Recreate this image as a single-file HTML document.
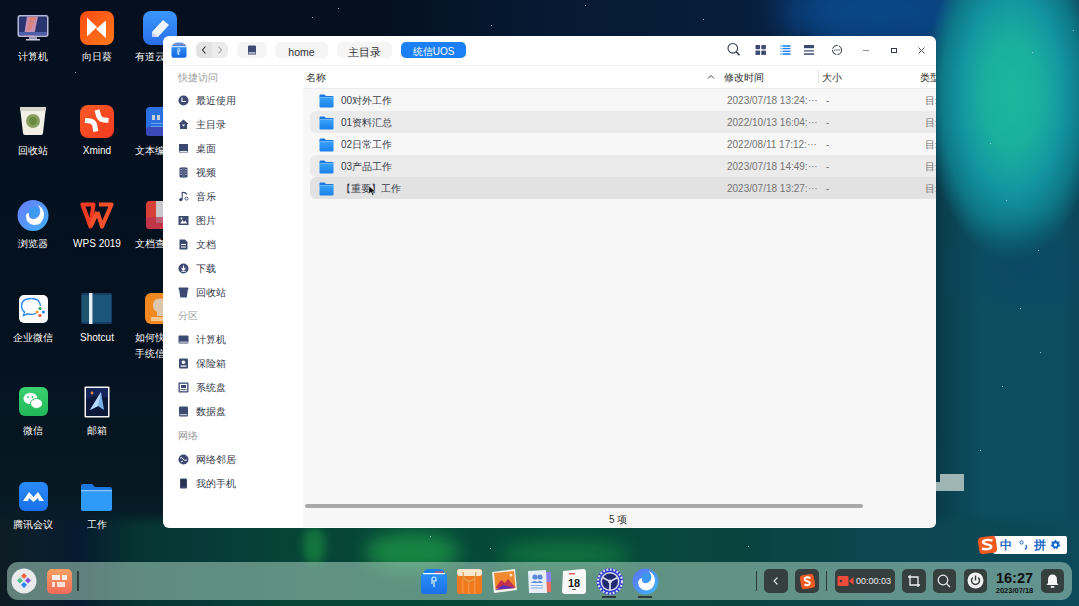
<!DOCTYPE html>
<html><head><meta charset="utf-8">
<style>
*{margin:0;padding:0;box-sizing:border-box}
html,body{width:1079px;height:606px;overflow:hidden}
body{position:relative;font-family:"Liberation Sans",sans-serif;background:#04101f}
.abs{position:absolute}
#bg{position:absolute;left:0;top:0;width:1079px;height:606px;overflow:hidden;
background:linear-gradient(180deg,#04101f 0,#04111f 320px,#061822 480px,#08202a 540px,#0a3030 600px)}
#bg div{position:absolute}

#win{position:absolute;left:163px;top:36px;width:773px;height:492px;background:#fff;border-radius:6px;overflow:hidden}
#main{position:absolute;left:140px;top:52px;width:633px;height:439px;background:#f7f7f7}
.t{position:absolute;white-space:nowrap;font-size:10px;line-height:12px}
.nav{position:absolute;top:6px;height:16px;border-radius:6px}
.crumb{position:absolute;top:6px;height:16px;border-radius:5px;background:#f5f5f6;color:#303030;font-size:10.5px;line-height:16px;padding-top:2px;text-align:center}
.side{position:absolute;left:15px;font-size:10px;line-height:12px;color:#353a4c;white-space:nowrap}
.side svg{position:absolute;left:0;top:1px}
.side span{position:absolute;left:18px;top:1px}
.sec{position:absolute;margin-top:1px;left:15px;font-size:10px;line-height:12px;color:#9a9a9a}
.row{position:absolute;left:7px;width:660px;height:22px;border-radius:6px}
.row .fi{position:absolute;left:9px;top:5px}
.row .nm{position:absolute;top:6px;left:31px;font-size:10px;line-height:12px;color:#383d4a;white-space:nowrap}
.row .dt{position:absolute;top:6px;left:417px;font-size:10px;line-height:12px;color:#737373;white-space:nowrap}
.row .sz{position:absolute;top:6px;left:516px;font-size:10px;line-height:12px;color:#737373}
.row .ty{position:absolute;top:6px;left:615px;font-size:10px;line-height:12px;color:#737373;white-space:nowrap}

.lbl{position:absolute;margin-top:1px;font-size:10px;line-height:12px;color:#fff;white-space:nowrap;text-shadow:0 0 2px rgba(0,0,0,0.8)}
.ico{position:absolute}

#dock{position:absolute;left:7px;top:562px;width:1065px;height:38px;border-radius:11px;background:rgba(156,196,180,0.6)}
.db{position:absolute;top:569px;height:24px;border-radius:5px;background:#353f3e}
.dsep{position:absolute;top:571px;width:2px;height:20px;background:#2f3a3a}
</style></head><body>
<div id="bg">
<div style="left:380px;top:0;width:420px;height:40px;background:linear-gradient(90deg,rgba(6,24,48,0),rgba(6,26,52,1) 40%,rgba(8,30,60,1))"></div>
<div style="left:900px;top:0;width:179px;height:606px;background:linear-gradient(90deg,rgba(10,60,75,0) 0,rgba(10,64,80,1) 45px,rgba(12,78,94,1) 80px,rgba(12,78,96,1) 160px,rgba(12,70,90,1))"></div>
<div style="left:780px;top:-40px;width:200px;height:100px;border-radius:50%;background:#0a4585;filter:blur(18px)"></div>
<div style="left:900px;top:0;width:179px;height:330px;background:radial-gradient(ellipse 88px 165px at 112px 95px,#1cb89c 0%,#19ad9e 35%,#1396a0 58%,#0e7888 80%,rgba(12,80,96,0) 100%)"></div>
<div style="left:936px;top:200px;width:143px;height:140px;background:radial-gradient(ellipse 90px 60px at 90px 70px,rgba(11,70,105,0.55),rgba(11,70,105,0))"></div>
<div style="left:0;top:512px;width:1079px;height:94px;background:linear-gradient(90deg,#0e1c22 0,#0a1e2c 40px,#061a30 80px,#063430 135px,#073a38 200px,#064436 300px,#054838 450px,#054a3a 600px,#0a4440 750px,#0c4650 880px,#0c4a5a 1079px);-webkit-mask-image:linear-gradient(180deg,transparent 0,#000 14px)"></div>
<div style="left:365px;top:532px;width:95px;height:40px;border-radius:50%;background:#1f9a48;filter:blur(9px);opacity:0.75"></div>
<div style="left:303px;top:528px;width:22px;height:36px;border-radius:40%;background:#1a8a42;filter:blur(5px);opacity:0.7"></div>
<div style="left:500px;top:540px;width:130px;height:30px;border-radius:50%;background:#178a40;filter:blur(9px);opacity:0.6"></div>
<div style="left:104px;top:27px;width:1px;height:1px;background:#c8d8e8;opacity:0.8"></div><div style="left:703px;top:19px;width:1px;height:1px;background:#c8d8e8;opacity:0.8"></div><div style="left:491px;top:25px;width:1px;height:1px;background:#c8d8e8;opacity:0.8"></div><div style="left:312px;top:17px;width:1px;height:1px;background:#c8d8e8;opacity:0.8"></div><div style="left:338px;top:8px;width:1px;height:1px;background:#c8d8e8;opacity:0.8"></div><div style="left:585px;top:5px;width:1px;height:1px;background:#c8d8e8;opacity:0.8"></div><div style="left:1032px;top:52px;width:1px;height:1px;background:#c8d8e8;opacity:0.8"></div><div style="left:1006px;top:200px;width:1px;height:1px;background:#c8d8e8;opacity:0.8"></div><div style="left:1020px;top:308px;width:1px;height:1px;background:#c8d8e8;opacity:0.8"></div><div style="left:1040px;top:352px;width:1px;height:1px;background:#c8d8e8;opacity:0.8"></div><div style="left:1002px;top:386px;width:1px;height:1px;background:#c8d8e8;opacity:0.8"></div><div style="left:1073px;top:30px;width:1px;height:1px;background:#c8d8e8;opacity:0.8"></div><div style="left:980px;top:450px;width:1px;height:1px;background:#c8d8e8;opacity:0.8"></div><div style="left:990px;top:143px;width:1px;height:1px;background:#c8d8e8;opacity:0.8"></div><div style="left:75px;top:72px;width:1px;height:1px;background:#c8d8e8;opacity:0.8"></div><div style="left:105px;top:128px;width:1px;height:1px;background:#c8d8e8;opacity:0.8"></div><div style="left:150px;top:150px;width:1px;height:1px;background:#c8d8e8;opacity:0.8"></div><div style="left:430px;top:536px;width:1px;height:1px;background:#c8d8e8;opacity:0.8"></div><div style="left:490px;top:548px;width:1px;height:1px;background:#c8d8e8;opacity:0.8"></div><div style="left:748px;top:546px;width:1px;height:1px;background:#c8d8e8;opacity:0.8"></div><div style="left:1038px;top:250px;width:1px;height:1px;background:#c8d8e8;opacity:0.8"></div>
</div>

<div id="desk">
<svg class="ico" style="left:16px;top:14px" width="34" height="28" viewBox="0 0 34 28">
<rect x="1.5" y="1" width="31" height="22" rx="2.5" fill="#b8b8d8"/>
<rect x="3" y="2.5" width="28" height="19" rx="1" fill="#2a3570"/>
<path d="M11 2.5 L22 2.5 L18 21.5 L8 21.5 Z" fill="#c890b0"/>
<path d="M14 3 L20 3 L15 15 L11 18 Z" fill="#e0806a" opacity="0.8"/>
<rect x="3" y="18" width="28" height="3" fill="#5060a8"/>
<rect x="13" y="23" width="8" height="2.5" fill="#9a9ab8"/>
<rect x="10" y="25" width="14" height="1.5" fill="#c8c8d8"/>
</svg><div class="lbl" style="left:-17px;width:100px;text-align:center;top:50px">计算机</div>
<svg class="ico" style="left:80px;top:11px" width="34" height="34" viewBox="0 0 34 34">
<defs><linearGradient id="g1" x1="0" y1="0" x2="1" y2="1"><stop offset="0" stop-color="#ff4a14"/><stop offset="1" stop-color="#ff7a18"/></linearGradient></defs>
<rect x="0" y="0" width="34" height="34" rx="8" fill="url(#g1)"/>
<path d="M7 6.5 L17 16 L7 25.5 Z" fill="#fff"/><path d="M26 9.5 L26 27 L16 18 Z" fill="#fff"/>
</svg><div class="lbl" style="left:47px;width:100px;text-align:center;top:50px">向日葵</div>
<svg class="ico" style="left:143px;top:11px" width="34" height="34" viewBox="0 0 34 34">
<defs><linearGradient id="g2" x1="0" y1="0" x2="0" y2="1"><stop offset="0" stop-color="#3a98ff"/><stop offset="1" stop-color="#2a6ee8"/></linearGradient></defs>
<rect x="0" y="0" width="34" height="34" rx="8" fill="url(#g2)"/>
<path d="M9 21 L20 9 L26 14 L15 26 L9 26 Z" fill="#f0f4ff"/><path d="M9 21 L15 26 L9 26 Z" fill="#c8d4f0"/>
</svg><div class="lbl" style="left:110px;width:100px;text-align:center;top:50px">有道云笔记</div>
<svg class="ico" style="left:19px;top:106px" width="28" height="30" viewBox="0 0 28 30">
<path d="M1 1 L27 1 L24 27 Q24 29 22 29 L6 29 Q4 29 4 27 Z" fill="#f2f0e6"/>
<path d="M1 1 L27 1 L26.5 5 L1.5 5 Z" fill="#d8d6cc"/>
<circle cx="14" cy="15" r="7" fill="#8aa060"/><circle cx="14" cy="15" r="4" fill="#6a8a40"/>
</svg><div class="lbl" style="left:-17px;width:100px;text-align:center;top:144px">回收站</div>
<svg class="ico" style="left:80px;top:105px" width="34" height="33" viewBox="0 0 34 33">
<defs><linearGradient id="g3" x1="0" y1="0" x2="1" y2="1"><stop offset="0" stop-color="#ff5a28"/><stop offset="1" stop-color="#f03a20"/></linearGradient></defs>
<rect x="0" y="0" width="34" height="33" rx="8" fill="url(#g3)"/>
<path d="M5 15.5 L10.5 16 Q14 17 14.8 20.5 L15.8 26.5" stroke="#fff" stroke-width="5" fill="none"/><path d="M17 5 L18.5 10.5 Q19.5 14 23 14.8 L28.5 15.5" stroke="#fff" stroke-width="5" fill="none"/>
</svg><div class="lbl" style="left:47px;width:100px;text-align:center;top:144px">Xmind</div>
<svg class="ico" style="left:146px;top:107px" width="30" height="29" viewBox="0 0 30 29">
<rect x="0" y="0" width="30" height="29" rx="4" fill="#2a70e0"/><rect x="0" y="20" width="30" height="9" rx="3" fill="#3a4ab8"/>
<rect x="6" y="8" width="3" height="5" fill="#c8d0d8"/><rect x="11" y="8" width="3" height="5" fill="#c8d0d8"/>
<rect x="5" y="16" width="14" height="1" fill="#6aa0f0"/><rect x="5" y="19" width="14" height="1" fill="#6aa0f0"/>
</svg><div class="lbl" style="left:135px;top:144px">文本编辑器</div>
<svg class="ico" style="left:17px;top:199px" width="32" height="33" viewBox="0 0 32 33">
<defs><linearGradient id="g4" x1="0" y1="0" x2="1" y2="1"><stop offset="0" stop-color="#6a7cf8"/><stop offset="1" stop-color="#40b0f8"/></linearGradient></defs>
<circle cx="16" cy="16.5" r="15.5" fill="url(#g4)"/>
<path d="M9 17 Q9 25 17 26 Q26 26 27 16 Q27 9 21 6 Q25 12 22 17 Q19 21 15 20 Q11 19 12 14 Q9 14 9 17 Z" fill="#fff"/>
<circle cx="17" cy="13" r="5" fill="#3a9af0"/>
</svg><div class="lbl" style="left:-17px;width:100px;text-align:center;top:237px">浏览器</div>
<svg class="ico" style="left:80px;top:202px" width="34" height="28" viewBox="0 0 34 28">
<path d="M2.5 2.5 L13.5 2.5 L10.5 24.5 Z" stroke="#f03a24" stroke-width="4.2" stroke-linejoin="round" fill="none"/>
<path d="M10.5 24.5 L17.5 10 M17.5 10 L22 24.5 L31.5 2.5 L19 2.5" stroke="#f5502a" stroke-width="4.2" stroke-linejoin="round" fill="none"/>
</svg><div class="lbl" style="left:47px;width:100px;text-align:center;top:237px">WPS 2019</div>
<svg class="ico" style="left:146px;top:201px" width="30" height="28" viewBox="0 0 30 28">
<rect x="8" y="0" width="20" height="24" fill="#c8c8cc"/>
<path d="M0 4 Q0 0 4 0 L10 0 L10 22 L22 22 Q22 28 18 28 L4 28 Q0 28 0 24 Z" fill="#d8403a"/>
<rect x="0" y="16" width="20" height="12" rx="3" fill="#b83050" opacity="0.7"/>
</svg><div class="lbl" style="left:135px;top:237px">文档查看器</div>
<svg class="ico" style="left:19px;top:295px" width="29" height="28" viewBox="0 0 29 28">
<rect x="0" y="0" width="29" height="28" rx="5" fill="#fafcff"/>
<path d="M12.5 3.5 Q2.5 3.5 2.5 11 Q2.5 15 5.5 17 L4.5 20.5 L8.5 18.8 Q10.5 19.3 12.5 19.3 Q15 19.3 17 18.5" fill="none" stroke="#2a8af0" stroke-width="1.3"/><path d="M12.5 3.5 Q21 3.5 21.5 11" fill="none" stroke="#2a8af0" stroke-width="1.3"/>
<circle cx="21" cy="13.5" r="1.6" fill="#20a860"/><circle cx="18" cy="17" r="1.6" fill="#f0a030"/><circle cx="21" cy="20.5" r="1.6" fill="#f05030"/><circle cx="24.5" cy="17" r="1.6" fill="#2a8af0"/>
</svg><div class="lbl" style="left:-17px;width:100px;text-align:center;top:331px">企业微信</div>
<svg class="ico" style="left:81px;top:293px" width="31" height="31" viewBox="0 0 31 31">
<rect x="0" y="0" width="31" height="31" rx="2" fill="#163e62"/>
<rect x="1" y="2" width="7" height="27" fill="#1d5270"/><rect x="12" y="2" width="18" height="27" fill="#1c5678"/>
<rect x="8" y="0" width="3.5" height="31" fill="#e8f0f8"/>
</svg><div class="lbl" style="left:47px;width:100px;text-align:center;top:331px">Shotcut</div>
<svg class="ico" style="left:145px;top:293px" width="30" height="31" viewBox="0 0 30 31">
<rect x="0" y="0" width="30" height="31" rx="6" fill="#f08a20"/>
<path d="M12 6 Q19 4 22 10 Q23 16 18 19 L18 23 L12 23 L12 19 Q7 16 8 11 Q9 7 12 6 Z" fill="#d8d0c8" opacity="0.85"/>
<rect x="6" y="24" width="12" height="4" fill="#f8e0c0" opacity="0.7"/>
</svg><div class="lbl" style="left:135px;top:331px">如何快速上</div>
<div class="lbl" style="left:135px;top:347px">手统信UOS</div>
<svg class="ico" style="left:19px;top:387px" width="29" height="29" viewBox="0 0 29 29">
<defs><linearGradient id="g5" x1="0" y1="0" x2="0" y2="1"><stop offset="0" stop-color="#3ad070"/><stop offset="1" stop-color="#20b858"/></linearGradient></defs>
<rect x="0" y="0" width="29" height="29" rx="6" fill="url(#g5)"/>
<ellipse cx="11.5" cy="11.5" rx="7" ry="5.8" fill="#fff"/><ellipse cx="17.5" cy="16.5" rx="6" ry="5" fill="#fff" stroke="#28c060" stroke-width="1"/>
<circle cx="9" cy="10" r="0.9" fill="#28c060"/><circle cx="13.5" cy="10" r="0.9" fill="#28c060"/>
</svg><div class="lbl" style="left:-17px;width:100px;text-align:center;top:424px">微信</div>
<svg class="ico" style="left:84px;top:386px" width="26" height="32" viewBox="0 0 26 32">
<rect x="0.5" y="0.5" width="25" height="31" rx="1" fill="#f4f4f4"/>
<rect x="2" y="2" width="22" height="28" fill="#0c1838"/>
<path d="M2 2 L24 2 L24 12 Q14 6 2 14 Z" fill="#1a2a6a" opacity="0.7"/>
<path d="M17 6 L20 24 L14 20 L6 24 Z" fill="#7ab0e8"/><path d="M17 6 L14 20 L6 24 Z" fill="#b8d8ff"/>
<circle cx="8" cy="7" r="1.4" fill="#f08a30"/>
</svg><div class="lbl" style="left:47px;width:100px;text-align:center;top:424px">邮箱</div>
<svg class="ico" style="left:19px;top:482px" width="29" height="29" viewBox="0 0 29 29">
<defs><linearGradient id="g6" x1="0" y1="0" x2="0" y2="1"><stop offset="0" stop-color="#2a8cf8"/><stop offset="1" stop-color="#1a70e8"/></linearGradient></defs>
<rect x="0" y="0" width="29" height="29" rx="6" fill="url(#g6)"/>
<path d="M4 19 L10 10 L14.5 15 L19 10 L25 19 L20 19 L19 16 L14.5 20 L10 16 L9 19 Z" fill="#fff"/>
</svg><div class="lbl" style="left:-17px;width:100px;text-align:center;top:518px">腾讯会议</div>
<svg class="ico" style="left:81px;top:484px" width="31" height="27" viewBox="0 0 31 27">
<path d="M0 2 Q0 0 2 0 L11 0 L14 3 L29 3 Q31 3 31 5 L31 8 L0 8 Z" fill="#1a78e0"/>
<path d="M0 6 L31 6 L31 25 Q31 27 29 27 L2 27 Q0 27 0 25 Z" fill="#2f9af8"/>
<rect x="0" y="6" width="31" height="1.2" fill="#8ccaff"/>
</svg><div class="lbl" style="left:47px;width:100px;text-align:center;top:518px">工作</div>
</div>
<div id="win">
 <!-- title bar -->
 <svg class="abs" style="left:8px;top:6px" width="16" height="16" viewBox="0 0 16 16">
<defs><linearGradient id="ti" x1="0" y1="0" x2="0" y2="1"><stop offset="0" stop-color="#3a9af8"/><stop offset="1" stop-color="#1268e0"/></linearGradient></defs>
<path d="M0.5 6 Q0.5 0.5 8 0.5 Q15.5 0.5 15.5 6 L15.5 14 Q15.5 15.8 13.5 15.8 L2.5 15.8 Q0.5 15.8 0.5 14 Z" fill="url(#ti)"/>
<path d="M2.5 2.6 Q8 1.2 13.5 2.6" stroke="#e87a8a" stroke-width="0.8" fill="none"/>
<rect x="1" y="4.2" width="14" height="1" fill="#fff" opacity="0.95"/>
<path d="M6.8 12.5 L6.8 7.5 Q6.8 6.6 7.8 6.6 Q8.8 6.6 8.8 7.5 L8.8 9 L6.8 9 M7.8 9 L7.8 13" stroke="#d8ecff" stroke-width="0.9" fill="none"/>
</svg>
 <div class="nav" style="left:33px;width:32px;background:#ececec"></div>
 <div class="nav" style="left:33px;width:16px;background:#e3e3e3;border-radius:6px 0 0 6px"></div>
 <svg class="abs" style="left:37px;top:8px" width="8" height="12" viewBox="0 0 8 12"><path d="M5.5 2.5 L2.5 6 L5.5 9.5" stroke="#303030" stroke-width="1.1" fill="none"/></svg>
 <svg class="abs" style="left:53px;top:8px" width="8" height="12" viewBox="0 0 8 12"><path d="M2.5 2.5 L5.5 6 L2.5 9.5" stroke="#a0a0a0" stroke-width="1.1" fill="none"/></svg>
 <div class="crumb" style="left:74px;width:30px"></div>
 <svg class="abs" style="left:84px;top:9px" width="10" height="10" viewBox="0 0 10 10"><path d="M1 1.5 Q1 0.5 2 0.5 L8 0.5 Q9 0.5 9 1.5 L9 9.5 L1 9.5 Z" fill="#3c4a72"/><rect x="1.6" y="7.3" width="6.8" height="1.2" fill="#e6e8ef"/></svg>
 <div class="crumb" style="left:112px;width:53px">home</div>
 <div class="crumb" style="left:174px;width:55px">主目录</div>
 <div class="crumb" style="left:238px;width:65px;background:#1b7ff5;color:#fff;font-size:10px">统信UOS</div>
 <!-- right icons -->
 <svg class="abs" style="left:563px;top:6px" width="16" height="16" viewBox="0 0 16 16"><circle cx="6.8" cy="6.3" r="4.8" stroke="#303848" stroke-width="1.1" fill="none"/><path d="M10.2 9.8 L13.5 13.2" stroke="#303848" stroke-width="1.6"/></svg>
 <svg class="abs" style="left:592px;top:9px" width="12" height="11" viewBox="0 0 12 11"><rect x="0.5" y="0" width="4.6" height="4.3" rx="0.8" fill="#3c4a72"/><rect x="6.3" y="0" width="4.6" height="4.3" rx="0.8" fill="#3c4a72"/><rect x="0.5" y="5.6" width="4.6" height="4.3" fill="#3c4a72"/><rect x="6.3" y="5.6" width="4.6" height="4.3" fill="#3c4a72"/></svg>
 <svg class="abs" style="left:617px;top:9px" width="12" height="11" viewBox="0 0 12 11"><g fill="#1b7ff5"><rect x="0.5" y="0.2" width="1" height="1.6"/><rect x="2.5" y="0.2" width="8" height="1.6"/><rect x="0.5" y="2.9" width="1" height="1.3"/><rect x="2.5" y="2.9" width="8" height="1.3"/><rect x="0.5" y="5.6" width="1" height="1.3"/><rect x="2.5" y="5.6" width="8" height="1.3"/><rect x="0.5" y="8.2" width="1" height="1.6"/><rect x="2.5" y="8.2" width="8" height="1.6"/></g></svg>
 <svg class="abs" style="left:641px;top:9px" width="12" height="11" viewBox="0 0 12 11"><g fill="#3c4a72"><rect x="0" y="0" width="10" height="3.2"/><rect x="0" y="5.3" width="10" height="1.2"/><rect x="0" y="8.3" width="10" height="1.5"/></g></svg>
 <svg class="abs" style="left:668px;top:8px" width="12" height="12" viewBox="0 0 12 12"><circle cx="6" cy="6" r="4.6" stroke="#303848" stroke-width="1" fill="none" stroke-dasharray="6.5 1.2"/><circle cx="3.9" cy="6" r="0.65" fill="#303848"/><circle cx="6" cy="6" r="0.65" fill="#303848"/><circle cx="8.1" cy="6" r="0.65" fill="#303848"/></svg>
 <div class="abs" style="left:700px;top:14px;width:6px;height:1px;background:#8a8fa0"></div>
 <div class="abs" style="left:728px;top:12px;width:6px;height:5px;border:1px solid #303848"></div>
 <svg class="abs" style="left:754px;top:10px" width="9" height="9" viewBox="0 0 9 9"><path d="M1.5 1.5 L7.5 7.5 M7.5 1.5 L1.5 7.5" stroke="#555" stroke-width="1"/></svg>
 <div class="abs" style="left:0;top:29px;width:773px;height:1px;background:#f3f3f3"></div>

 <!-- sidebar -->
 <div class="sec" style="top:35px">快捷访问</div>
 <div class="side" style="top:58px"><svg width="11" height="11" viewBox="0 0 11 11"><circle cx="5.5" cy="5.5" r="5" fill="#3c4a72"/><path d="M4 2.5 L4 6.5 L8 6.5" stroke="#fff" stroke-width="1.1" fill="none"/></svg><span>最近使用</span></div>
 <div class="side" style="top:82px"><svg width="11" height="11" viewBox="0 0 11 11"><path d="M5.5 0.5 L10.5 5 L9 5 L9 10 L2 10 L2 5 L0.5 5 Z" fill="#3c4a72"/><path d="M3.8 5.5 L7.2 5.5 L5.5 7.5 Z" fill="#fff"/></svg><span>主目录</span></div>
 <div class="side" style="top:106px"><svg width="11" height="11" viewBox="0 0 11 11"><rect x="1" y="1" width="9" height="8.5" fill="#3c4a72"/><rect x="1.6" y="8" width="7.8" height="1" fill="#e6e8ef"/></svg><span>桌面</span></div>
 <div class="side" style="top:130px"><svg width="11" height="11" viewBox="0 0 11 11"><rect x="1.5" y="0.5" width="8" height="10" rx="1" fill="#3c4a72"/><g fill="#fff"><rect x="2.6" y="2" width="1" height="1"/><rect x="2.6" y="4.5" width="1" height="1"/><rect x="2.6" y="7" width="1" height="1"/><rect x="7.4" y="2" width="1" height="1"/><rect x="7.4" y="4.5" width="1" height="1"/><rect x="7.4" y="7" width="1" height="1"/><rect x="4.2" y="0.5" width="2.6" height="10" fill="#5a6688"/></g></svg><span>视频</span></div>
 <div class="side" style="top:154px"><svg width="11" height="11" viewBox="0 0 11 11"><path d="M4.2 8.5 L4.2 1.5 Q7.5 1 9 3.5" stroke="#3c4a72" stroke-width="1.1" fill="none"/><circle cx="2.8" cy="8.6" r="1.7" fill="#3c4a72"/><circle cx="8.5" cy="7.6" r="1.5" fill="none" stroke="#3c4a72" stroke-width="0.9"/></svg><span>音乐</span></div>
 <div class="side" style="top:178px"><svg width="11" height="11" viewBox="0 0 11 11"><rect x="0.5" y="1" width="10" height="9" fill="#3c4a72"/><path d="M2 8.5 L4.5 5 L6 7 L7.5 5.5 L9 8.5 Z" fill="#fff"/><circle cx="3.5" cy="3.5" r="1" fill="#fff"/></svg><span>图片</span></div>
 <div class="side" style="top:202px"><svg width="11" height="11" viewBox="0 0 11 11"><path d="M1.5 0.5 L7 0.5 L9.5 3 L9.5 10.5 L1.5 10.5 Z" fill="#3c4a72"/><g fill="#fff"><rect x="3" y="5" width="5" height="1"/><rect x="3" y="7.5" width="5" height="1"/></g></svg><span>文档</span></div>
 <div class="side" style="top:226px"><svg width="11" height="11" viewBox="0 0 11 11"><circle cx="5.5" cy="5.5" r="5" fill="#3c4a72"/><path d="M5.5 2.5 L5.5 6.5 M3.5 5 L5.5 7 L7.5 5 M3.3 8.3 L7.7 8.3" stroke="#fff" stroke-width="1.1" fill="none"/></svg><span>下载</span></div>
 <div class="side" style="top:250px"><svg width="11" height="11" viewBox="0 0 11 11"><path d="M1 1.5 L10 1.5 L8.7 10.5 L2.3 10.5 Z" fill="#3c4a72"/><rect x="0.5" y="0.5" width="10" height="2" rx="1" fill="#3c4a72"/></svg><span>回收站</span></div>
 <div class="sec" style="top:273px">分区</div>
 <div class="side" style="top:297px"><svg width="11" height="11" viewBox="0 0 11 11"><rect x="0.5" y="1.5" width="10" height="8" rx="1" fill="#3c4a72"/><rect x="1.2" y="7.6" width="8.6" height="1" fill="#e6e8ef"/></svg><span>计算机</span></div>
 <div class="side" style="top:321px"><svg width="11" height="11" viewBox="0 0 11 11"><rect x="1" y="0.5" width="9" height="10" rx="1" fill="#3c4a72"/><circle cx="5.5" cy="4.2" r="1.8" fill="#fff"/><rect x="2.5" y="7.5" width="6" height="1.2" fill="#fff"/></svg><span>保险箱</span></div>
 <div class="side" style="top:345px"><svg width="11" height="11" viewBox="0 0 11 11"><rect x="0.5" y="0.5" width="10" height="10" rx="1" fill="#3c4a72"/><rect x="1.8" y="1.8" width="7.4" height="7.4" fill="#fff"/><rect x="3" y="3" width="5" height="3" fill="#3c4a72"/><rect x="2.5" y="7.2" width="6" height="1" fill="#3c4a72"/></svg><span>系统盘</span></div>
 <div class="side" style="top:369px"><svg width="11" height="11" viewBox="0 0 11 11"><rect x="1" y="0.5" width="9" height="10" rx="1" fill="#3c4a72"/><rect x="1.6" y="8.2" width="7.8" height="1" fill="#e6e8ef"/></svg><span>数据盘</span></div>
 <div class="sec" style="top:393px">网络</div>
 <div class="side" style="top:417px"><svg width="11" height="11" viewBox="0 0 11 11"><circle cx="5.5" cy="5.5" r="5" fill="#3c4a72"/><path d="M2 4 Q4 3 5 5 Q6 7 9 6 M3 8 L5 7" stroke="#fff" stroke-width="1" fill="none"/></svg><span>网络邻居</span></div>
 <div class="side" style="top:441px"><svg width="11" height="11" viewBox="0 0 11 11"><rect x="2" y="0.5" width="7" height="10" rx="1" fill="#3c4a72"/><rect x="3" y="1.5" width="5" height="7" fill="#2a3350"/></svg><span>我的手机</span></div>

 <!-- main -->
 <svg width="0" height="0" style="position:absolute"><defs><linearGradient id="fg" x1="0" y1="0" x2="0" y2="1"><stop offset="0" stop-color="#3aa4fa"/><stop offset="1" stop-color="#1a80ea"/></linearGradient></defs></svg>
 <div id="main">
  <div class="abs" style="left:0;top:-22px;width:633px;height:22px;background:#fff"></div>
  <div class="abs" style="left:0;top:0;width:633px;height:1px;background:#ececec"></div>
  <div class="t" style="left:3px;top:-16px;color:#303030">名称</div>
  <svg class="abs" style="left:403px;top:-16px" width="10" height="10" viewBox="0 0 10 10"><path d="M2 6.5 L5 3.5 L8 6.5" stroke="#404040" stroke-width="1" fill="none"/></svg>
  <div class="t" style="left:421px;top:-16px;color:#303030">修改时间</div>
  <div class="abs" style="left:515px;top:-18px;width:1px;height:14px;background:#e4e4e4"></div>
  <div class="t" style="left:519px;top:-16px;color:#303030">大小</div>
  <div class="t" style="left:617px;top:-16px;color:#303030">类型</div>
<div class="row" style="top:1px;background:#f7f7f7"><svg class="fi" width="15" height="14" viewBox="0 0 15 14"><path d="M0.5 1.5 Q0.5 0.5 1.5 0.5 L5.5 0.5 L7 2 L13.5 2 Q14.5 2 14.5 3 L14.5 4 L0.5 4 Z" fill="#1a78e0"/><path d="M0.5 3.2 L14.5 3.2 L14.5 12.5 Q14.5 13.5 13.5 13.5 L1.5 13.5 Q0.5 13.5 0.5 12.5 Z" fill="url(#fg)"/><rect x="0.5" y="3.2" width="14" height="0.8" fill="#7cc0ff"/></svg><div class="nm">00对外工作</div><div class="dt">2023/07/18 13:24:···</div><div class="sz">-</div><div class="ty">目录</div></div>
<div class="row" style="top:23px;background:#ebebeb"><svg class="fi" width="15" height="14" viewBox="0 0 15 14"><path d="M0.5 1.5 Q0.5 0.5 1.5 0.5 L5.5 0.5 L7 2 L13.5 2 Q14.5 2 14.5 3 L14.5 4 L0.5 4 Z" fill="#1a78e0"/><path d="M0.5 3.2 L14.5 3.2 L14.5 12.5 Q14.5 13.5 13.5 13.5 L1.5 13.5 Q0.5 13.5 0.5 12.5 Z" fill="url(#fg)"/><rect x="0.5" y="3.2" width="14" height="0.8" fill="#7cc0ff"/></svg><div class="nm">01资料汇总</div><div class="dt">2022/10/13 16:04:···</div><div class="sz">-</div><div class="ty">目录</div></div>
<div class="row" style="top:45px;background:#f7f7f7"><svg class="fi" width="15" height="14" viewBox="0 0 15 14"><path d="M0.5 1.5 Q0.5 0.5 1.5 0.5 L5.5 0.5 L7 2 L13.5 2 Q14.5 2 14.5 3 L14.5 4 L0.5 4 Z" fill="#1a78e0"/><path d="M0.5 3.2 L14.5 3.2 L14.5 12.5 Q14.5 13.5 13.5 13.5 L1.5 13.5 Q0.5 13.5 0.5 12.5 Z" fill="url(#fg)"/><rect x="0.5" y="3.2" width="14" height="0.8" fill="#7cc0ff"/></svg><div class="nm">02日常工作</div><div class="dt">2022/08/11 17:12:···</div><div class="sz">-</div><div class="ty">目录</div></div>
<div class="row" style="top:67px;background:#ebebeb"><svg class="fi" width="15" height="14" viewBox="0 0 15 14"><path d="M0.5 1.5 Q0.5 0.5 1.5 0.5 L5.5 0.5 L7 2 L13.5 2 Q14.5 2 14.5 3 L14.5 4 L0.5 4 Z" fill="#1a78e0"/><path d="M0.5 3.2 L14.5 3.2 L14.5 12.5 Q14.5 13.5 13.5 13.5 L1.5 13.5 Q0.5 13.5 0.5 12.5 Z" fill="url(#fg)"/><rect x="0.5" y="3.2" width="14" height="0.8" fill="#7cc0ff"/></svg><div class="nm">03产品工作</div><div class="dt">2023/07/18 14:49:···</div><div class="sz">-</div><div class="ty">目录</div></div>
<div class="row" style="top:89px;background:#e2e2e2"><svg class="fi" width="15" height="14" viewBox="0 0 15 14"><path d="M0.5 1.5 Q0.5 0.5 1.5 0.5 L5.5 0.5 L7 2 L13.5 2 Q14.5 2 14.5 3 L14.5 4 L0.5 4 Z" fill="#1a78e0"/><path d="M0.5 3.2 L14.5 3.2 L14.5 12.5 Q14.5 13.5 13.5 13.5 L1.5 13.5 Q0.5 13.5 0.5 12.5 Z" fill="url(#fg)"/><rect x="0.5" y="3.2" width="14" height="0.8" fill="#7cc0ff"/></svg><div class="nm">【重要】工作</div><div class="dt">2023/07/18 13:27:···</div><div class="sz">-</div><div class="ty">目录</div></div>
<div class="abs" style="left:2px;top:416px;width:558px;height:4px;border-radius:2px;background:#a8a8a8"></div>
<div class="t" style="left:306px;top:426px;color:#303030">5 项</div>

 </div>
</div>
<div id="dock"></div>
<svg class="abs" style="left:11px;top:568px" width="26" height="26" viewBox="0 0 26 26">
<circle cx="13" cy="13" r="12.5" fill="#e8eaec"/>
<path d="M13 5 L16 8 L13 11 L10 8 Z" fill="#f06a3a"/><path d="M17 9.5 L20 12.5 L17 15.5 L14 12.5 Z" fill="#8a50e0"/>
<path d="M13 14 L16 17 L13 20 L10 17 Z" fill="#2a88f0"/><path d="M9 9.5 L12 12.5 L9 15.5 L6 12.5 Z" fill="#50c090"/>
</svg><svg class="abs" style="left:47px;top:569px" width="25" height="25" viewBox="0 0 25 25">
<defs><linearGradient id="d1" x1="0" y1="0" x2="0" y2="1"><stop offset="0" stop-color="#f8a060"/><stop offset="1" stop-color="#f06a5a"/></linearGradient></defs>
<rect x="0" y="0" width="25" height="25" rx="5" fill="url(#d1)"/>
<rect x="5" y="6" width="8" height="5" fill="#fff" opacity="0.85"/><rect x="15" y="6" width="5" height="5" fill="#fff" opacity="0.85"/>
<rect x="5" y="13" width="3" height="5" fill="#fff" opacity="0.75"/><rect x="10" y="13" width="8" height="5" fill="#fff" opacity="0.75"/>
</svg><div class="dsep" style="left:77px;width:1.5px"></div>
<svg class="abs" style="left:421px;top:568px" width="26" height="27" viewBox="0 0 26 27">
<defs><linearGradient id="d2" x1="0" y1="0" x2="0" y2="1"><stop offset="0" stop-color="#2a90f8"/><stop offset="1" stop-color="#1a70e8"/></linearGradient></defs>
<path d="M3 4 Q3 1 8 1 L18 1 Q23 1 23 4 L23 6 L3 6 Z" fill="#1a80f0"/>
<rect x="0" y="5" width="26" height="21" rx="3" fill="url(#d2)"/>
<rect x="2" y="5" width="22" height="1.2" fill="#fff"/><rect x="14" y="3.5" width="8" height="1.2" fill="#f05050"/>
<path d="M11 16 L11 11 Q11 9 13 9 Q15 9 15 11 L15 13 L11 13 M13 13 L13 19" stroke="#d8ecff" stroke-width="1.2" fill="none"/>
</svg><svg class="abs" style="left:457px;top:569px" width="25" height="25" viewBox="0 0 25 25">
<rect x="0" y="0" width="25" height="25" rx="3" fill="#f07a20"/>
<rect x="0" y="0" width="25" height="7" rx="3" fill="#f8e8d0"/>
<path d="M6 3 Q6 12 12.5 12 Q19 12 19 3" stroke="#e0a050" stroke-width="1.3" fill="none"/>
<rect x="5" y="9" width="1.5" height="16" fill="#f89040"/><rect x="11" y="13" width="1.5" height="12" fill="#f89040"/><rect x="17" y="9" width="1.5" height="16" fill="#f89040"/>
</svg><svg class="abs" style="left:491px;top:568px" width="27" height="27" viewBox="0 0 27 27">
<path d="M1 4 L24 1 L26 22 L3 25 Z" fill="#f4f0ea"/>
<path d="M3 5 L23 3 L24.5 20 L4.5 22 Z" fill="#f08a30"/>
<path d="M4.5 20 L10 12 L14 15 L17 11 L24.5 19.5 Z" fill="#c03050"/>
<path d="M4.5 22 L12 17 L24.5 20 Z" fill="#6030b0"/>
<circle cx="20" cy="7" r="1.5" fill="#ffe0c0"/>
</svg><svg class="abs" style="left:527px;top:569px" width="26" height="25" viewBox="0 0 26 25">
<rect x="16" y="3" width="8" height="20" fill="#e86a60"/><rect x="16" y="3" width="8" height="10" fill="#8a80f0"/>
<path d="M1 2 L19 1 L20 24 L2 24 Z" fill="#e8eef8"/>
<circle cx="8" cy="8" r="2.6" fill="#5a8ad8"/><circle cx="13" cy="8" r="2.6" fill="#5a8ad8"/>
<path d="M4 14 Q8 10 11 14 Z M9 14 Q13 10 16 14 Z" fill="#5a8ad8"/>
<rect x="4" y="16" width="12" height="1" fill="#8ab0e8"/><rect x="4" y="18.5" width="12" height="1" fill="#8ab0e8"/>
</svg><svg class="abs" style="left:561px;top:568px" width="26" height="27" viewBox="0 0 26 27">
<path d="M2 3 L22 1 Q25 1 25 4 L25 23 Q25 26 22 26 L4 26 Q1 26 1 23 Z" fill="#f8f8f8"/>
<rect x="8" y="5" width="6" height="1.5" fill="#f06060"/>
<text x="13" y="19" font-family="Liberation Sans" font-size="11" font-weight="bold" text-anchor="middle" fill="#202020">18</text>
<rect x="11" y="21" width="4" height="1" fill="#606060"/>
</svg><svg class="abs" style="left:596px;top:568px" width="28" height="27" viewBox="0 0 28 27">
<circle cx="14" cy="13.5" r="13.3" fill="#3040d0"/>
<circle cx="14" cy="13.5" r="12" fill="none" stroke="#d8d8f0" stroke-width="2.2" stroke-dasharray="2 1.5"/>
<circle cx="14" cy="13.5" r="9.5" fill="#d8d8e8"/>
<circle cx="14" cy="13.5" r="8" fill="#202a70"/>
<path d="M14 13.5 L14 22 M14 13.5 L6.5 9.5 M14 13.5 L21.5 9.5" stroke="#d8d8e8" stroke-width="1.8"/>
<circle cx="14" cy="13.5" r="2" fill="#d8d8e8"/>
</svg><div class="abs" style="left:602px;top:596px;width:14px;height:2px;background:#2f3a3a"></div>
<svg class="abs" style="left:632px;top:568px" width="27" height="27" viewBox="0 0 27 27">
<defs><linearGradient id="d3" x1="0" y1="0" x2="1" y2="1"><stop offset="0" stop-color="#5a70f8"/><stop offset="1" stop-color="#40b8f8"/></linearGradient></defs>
<circle cx="13.5" cy="13.5" r="13" fill="url(#d3)"/>
<path d="M6 15 Q7 22 14 22.5 Q22 22 23 13 Q23 6 17 3 Q21 9 18 13 Q15.5 16 12 15 Q9 13.5 10.5 10 Q6.5 10.5 6 15 Z" fill="#fff"/>
<circle cx="14.5" cy="9.5" r="4.5" fill="#3a98f0"/>
</svg><div class="abs" style="left:638px;top:596px;width:14px;height:2px;background:#2f3a3a"></div>
<div class="dsep" style="left:755.5px;width:1.5px"></div>
<div class="db" style="left:764px;width:24px"></div>
<svg class="abs" style="left:770px;top:575px" width="12" height="12" viewBox="0 0 12 12"><path d="M7.5 2.5 L4 6 L7.5 9.5" stroke="#e8e8e8" stroke-width="1.1" fill="none"/></svg>
<div class="db" style="left:795px;width:24px"></div>
<svg class="abs" style="left:799px;top:573px" width="17" height="17" viewBox="0 0 17 17">
<rect x="1.5" y="1.5" width="14" height="14" rx="3" fill="#f05a20" transform="rotate(-10 8.5 8.5)"/>
<path d="M11.5 5 Q8 3.5 6 5 Q4.5 7 8 8 Q11.5 9 10.5 11 Q9 13 5.5 11.5" stroke="#fff" stroke-width="2" fill="none"/>
</svg><div class="dsep" style="left:825.5px;width:1.5px"></div>
<div class="db" style="left:835px;width:60px"></div>
<svg class="abs" style="left:837px;top:575px" width="18" height="12" viewBox="0 0 18 12">
<rect x="0.5" y="1" width="11" height="10" rx="1" fill="#f04a3a"/><path d="M12 6 L16.5 2 L16.5 10 Z" fill="#f04a3a"/>
<circle cx="4" cy="6" r="1.3" fill="#353f3e"/>
</svg><div class="abs" style="left:856px;top:575px;font-size:9px;line-height:12px;color:#f0f0f0;white-space:nowrap">00:00:03</div>
<div class="db" style="left:902px;width:24px"></div>
<svg class="abs" style="left:906px;top:573px" width="16" height="16" viewBox="0 0 16 16"><path d="M4 2 L4 12 L14 12 M2 4 L12 4 L12 14" stroke="#f0f0f0" stroke-width="1.3" fill="none"/></svg>
<div class="db" style="left:933px;width:23px"></div>
<svg class="abs" style="left:936px;top:573px" width="17" height="17" viewBox="0 0 17 17"><circle cx="7" cy="7" r="4.8" stroke="#f0f0f0" stroke-width="1.2" fill="none"/><path d="M10.5 10.5 L14 14" stroke="#f0f0f0" stroke-width="1.3"/></svg>
<div class="db" style="left:964px;width:23px"></div>
<svg class="abs" style="left:965px;top:570px" width="21" height="21" viewBox="0 0 21 21"><circle cx="10.5" cy="10.5" r="8" fill="#f4f4f4"/><path d="M7.8 7.5 A4 4 0 1 0 13.2 7.5" stroke="#353f3e" stroke-width="1.5" fill="none"/><path d="M10.5 5.5 L10.5 10.5" stroke="#353f3e" stroke-width="1.5"/></svg>
<div class="abs" style="left:994px;top:570px;width:41px;text-align:center;font-size:14.5px;font-weight:bold;line-height:16px;color:#101010;white-space:nowrap">16:27</div>
<div class="abs" style="left:994px;top:586.5px;width:41px;text-align:center;font-size:7.5px;font-weight:bold;line-height:8px;color:#101010;white-space:nowrap">2023/07/18</div>
<div class="db" style="left:1041px;width:23px"></div>
<svg class="abs" style="left:1045px;top:573px" width="15" height="16" viewBox="0 0 15 16"><path d="M7.5 1.5 Q3 1.5 3 7 L3 10 L1.5 12 L13.5 12 L12 10 L12 7 Q12 1.5 7.5 1.5 Z" fill="#f4f4f4"/><rect x="5.5" y="13" width="4" height="1.8" rx="0.9" fill="#f4f4f4"/></svg>
<div class="abs" style="left:993px;top:536px;width:74px;height:18px;background:#fff;border-radius:2px"></div>
<svg class="abs" style="left:977px;top:535px" width="21" height="20" viewBox="0 0 21 20">
<rect x="1.5" y="1.5" width="18" height="17" rx="4" fill="#f05a20" transform="rotate(-8 10.5 10)"/>
<path d="M15.5 5.5 Q10 4 6.5 6 Q4.5 8 10 9.3 Q15.5 10.5 14 12.8 Q11.5 15 5 13.8" stroke="#fff" stroke-width="2.4" fill="none"/>
</svg><div class="abs" style="left:1000px;top:538px;font-size:11.5px;line-height:14px;color:#1a68c8;font-weight:bold">中</div>
<svg class="abs" style="left:1019px;top:539px" width="10" height="12" viewBox="0 0 10 12"><circle cx="2.5" cy="3.5" r="1.6" fill="none" stroke="#1a68c8" stroke-width="1"/><path d="M6.5 6.5 Q7.5 6.5 7.5 7.8 Q7.5 9.5 5.8 10.5" stroke="#1a68c8" stroke-width="1.4" fill="none"/></svg>
<div class="abs" style="left:1034px;top:538px;font-size:11.5px;line-height:14px;color:#1a68c8;font-weight:bold">拼</div>
<svg class="abs" style="left:1050px;top:539px" width="11" height="11" viewBox="0 0 11 11"><path d="M5.5 0.5 L7 2.5 L9.8 2.5 L9 5 L10.5 7 L8 8 L7 10.5 L5.5 9 L4 10.5 L3 8 L0.5 7 L2 5 L1.2 2.5 L4 2.5 Z" fill="#1a68c8"/><circle cx="5.5" cy="5.8" r="1.6" fill="#fff"/></svg>
<div class="abs" style="left:940px;top:474px;width:24px;height:17px;background:#9fb5b5"></div>
<div class="abs" style="left:936px;top:482px;width:6px;height:9px;background:#9fb5b5"></div>
<svg class="abs" style="left:368px;top:185px" width="10" height="12" viewBox="0 0 10 12"><path d="M0.8 0.8 L0.8 9 L3 7.2 L4.6 10.6 L6 10 L4.5 6.8 L7.5 6.8 Z" fill="#0a0a0a" stroke="#fff" stroke-width="0.5"/></svg>
</body></html>
